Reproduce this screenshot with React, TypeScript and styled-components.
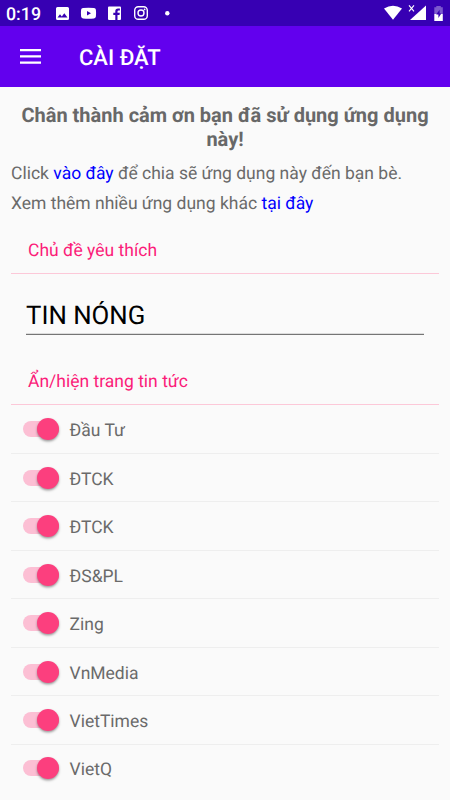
import React, { useState } from "react";
import styled, { createGlobalStyle } from "styled-components";

const GlobalStyle = createGlobalStyle`
  * { box-sizing: border-box; }
  body {
    margin: 0;
    background: #fafafa;
    font-family: Roboto, "Noto Sans", sans-serif;
    color: #6a6a6a;
    overflow: hidden;
    text-rendering: geometricPrecision;
  }
`;

const Screen = styled.div`
  width: 450px;
  height: 800px;
  display: flex;
  flex-direction: column;
  overflow: hidden;
  background: #fafafa;
`;

const StatusBar = styled.div`
  height: 26px;
  flex: none;
  display: flex;
  align-items: center;
  justify-content: space-between;
  background: #3700b3;
  color: #fff;
`;

const StatusGroup = styled.div`
  display: flex;
  align-items: center;
  height: 26px;
`;

const Clock = styled.span`
  width: 49px;
  padding: 3px 0 0 6px;
  font-size: 17.8px;
  font-weight: 500;
  line-height: 24px;
`;

const StatusIcon = styled.svg`
  display: block;
  flex: none;
  fill: #fff;
`;

const AppBar = styled.header`
  height: 61px;
  flex: none;
  display: flex;
  align-items: center;
  background: #6200ee;
`;

const MenuButton = styled.button`
  width: 79px;
  height: 61px;
  padding: 0 0 0 20px;
  border: 0;
  background: none;
`;

const Title = styled.h1`
  margin: 4px 0 0;
  color: #fff;
  font-size: 22px;
  font-weight: 500;
  line-height: 30px;
`;

const Content = styled.main`
  display: flex;
  flex-direction: column;
  padding: 16px 11px 0;
`;

const Thanks = styled.h2`
  margin: 0 0 6px;
  height: 48px;
  color: #686868;
  font-size: 20px;
  font-weight: 700;
  line-height: 24px;
  text-align: center;
`;

const Paragraph = styled.p`
  margin: 0;
  height: 30px;
  font-size: 17.5px;
  font-weight: 400;
  line-height: 35px;
  white-space: nowrap;
`;

const Link = styled.a`
  color: #0000ff;
  text-decoration: none;
`;

const SectionTitle = styled.h3<{ $height: number }>`
  margin: 0;
  height: ${(p) => p.$height}px;
  padding: 0 17px 11px;
  display: flex;
  align-items: flex-end;
  border-bottom: 1px solid #fcc8d8;
  color: #fb1c79;
  font-size: 17.5px;
  font-weight: 400;
  line-height: 22px;
`;

const TopicInput = styled.input`
  height: 46px;
  margin: 15px 15px 0;
  padding: 9px 0 0;
  border: 0;
  border-bottom: 1px solid #757575;
  border-radius: 0;
  outline: 0;
  background: none;
  box-shadow: inset 0 -1px 0 #dcdcdc;
  color: #000;
  font: 400 25.8px Roboto, sans-serif;
  text-rendering: inherit;
`;

const List = styled.ul`
  margin: 0.6px 0 0;
  padding: 0;
  list-style: none;
`;

const Row = styled.li`
  height: 48.45px;
  padding-left: 12px;
  display: flex;
  align-items: center;
  border-bottom: 1px solid #eeeeee;

  &:last-child {
    border-bottom-color: transparent;
  }
`;

const Track = styled.button<{ $on: boolean }>`
  width: 36px;
  height: 16px;
  flex: none;
  padding: 0;
  display: flex;
  align-items: center;
  justify-content: ${(p) => (p.$on ? "flex-end" : "flex-start")};
  border: 0;
  border-radius: 8px;
  background: ${(p) => (p.$on ? "#fcbfd4" : "#b8b8b8")};
`;

const Thumb = styled.span<{ $on: boolean }>`
  width: 22px;
  height: 22px;
  flex: none;
  border-radius: 50%;
  background: ${(p) => (p.$on ? "#fc3f7e" : "#fafafa")};
  box-shadow: 0 1.5px 2.5px rgba(0, 0, 0, 0.38);
`;

const RowLabel = styled.span`
  padding: 4.2px 0 0 10.5px;
  font-size: 17.5px;
  font-weight: 400;
  line-height: 24px;
`;

const sources = ["Đầu Tư", "ĐTCK", "ĐTCK", "ĐS&PL", "Zing", "VnMedia", "VietTimes", "VietQ"];

function SourceRow({ name }: { name: string }) {
  const [on, setOn] = useState(true);
  return (
    <Row>
      <Track $on={on} role="switch" aria-checked={on} aria-label={name} onClick={() => setOn(!on)}>
        <Thumb $on={on} />
      </Track>
      <RowLabel>{name}</RowLabel>
    </Row>
  );
}

const NotificationIcons = () => (
  <StatusIcon width="125" height="26" viewBox="49 0 125 26">
    <path fillRule="evenodd" d="M57.5 7h10A1.5 1.5 0 0 1 69 8.500v10a1.500 1.500 0 0 1-1.500 1.500h-10a1.500 1.500 0 0 1-1.500-1.500v-10A1.500 1.500 0 0 1 57.500 7zM57.500 17.500h10l-3.200-4.300-2.500 3.200-1.800-2.100z" />
    <path fillRule="evenodd" d="M83 8q5.500-.6 11 0 1.700.2 1.900 1.800.4 3.400 0 6.800-.2 1.700-1.900 1.900-5.500.5-11 0-1.700-.2-1.900-1.900-.4-3.400 0-6.800Q81.300 8.200 83 8zm4 2.900v4.600l4-2.300z" />
    <path d="M109 6.500h11a1 1 0 0 1 1 1v11.400a1 1 0 0 1-1 1h-2.500v-5h2l.3-2.100h-2.300v-1.300q0-1.100 1.200-1.100h1.200V8.500h-1.800q-2.800 0-2.800 2.800v1.500h-2v2.100h2v5H109a1 1 0 0 1-1-1V7.500a1 1 0 0 1 1-1z" />
    <rect x="134.700" y="6.700" width="12.600" height="12.600" rx="3.600" fill="none" stroke="#fff" strokeWidth="1.400" />
    <circle cx="141" cy="13" r="3" fill="none" stroke="#fff" strokeWidth="1.400" />
    <circle cx="144.600" cy="9.400" r=".9" />
    <circle cx="167.300" cy="13.300" r="2.200" />
  </StatusIcon>
);

const SystemIcons = () => (
  <StatusIcon width="70" height="26" viewBox="380 0 70 26">
    <path d="M384 8.500q9-5.300 18 0l-9 11.300z" />
    <path d="M426 5.500V20h-16z" />
    <path d="M409 5.300l5 6M414 5.300l-5 6" fill="none" stroke="#fff" strokeWidth="1.100" />
    <path opacity=".35" d="M434.300 7.300h2V6h4.500v1.300h2V14h-8.500z" />
    <path d="M434.300 14h8.500v7h-8.500z" />
    <path fill="#3700b3" d="M439.600 9.800l-3.400 4.700h2.200v3.600l2.900-4.500h-1.700z" />
  </StatusIcon>
);

export default function App() {
  const [topic, setTopic] = useState("TIN NÓNG");
  return (
    <>
      <GlobalStyle />
      <Screen>
        <StatusBar>
          <StatusGroup>
            <Clock>0:19</Clock>
            <NotificationIcons />
          </StatusGroup>
          <SystemIcons />
        </StatusBar>
        <AppBar>
          <MenuButton aria-label="Menu">
            <StatusIcon width="21" height="15" viewBox="0 0 21 15">
              <path d="M0 0h21v2.300H0zM0 6.200h21v2.300H0zM0 12.400h21v2.300H0z" />
            </StatusIcon>
          </MenuButton>
          <Title>CÀI ĐẶT</Title>
        </AppBar>
        <Content>
          <Thanks>Chân thành cảm ơn bạn đã sử dụng ứng dụng này!</Thanks>
          <Paragraph>
            Click <Link>vào đây</Link> để chia sẽ ứng dụng này đến bạn bè.
          </Paragraph>
          <Paragraph>
            Xem thêm nhiều ứng dụng khác <Link>tại đây</Link>
          </Paragraph>
          <SectionTitle $height={57}>Chủ đề yêu thích</SectionTitle>
          <TopicInput aria-label="Chủ đề yêu thích" value={topic} onChange={(e) => setTopic(e.target.value)} />
          <SectionTitle $height={70}>Ẩn/hiện trang tin tức</SectionTitle>
          <List>
            {sources.map((name, i) => (
              <SourceRow key={i} name={name} />
            ))}
          </List>
        </Content>
      </Screen>
    </>
  );
}
